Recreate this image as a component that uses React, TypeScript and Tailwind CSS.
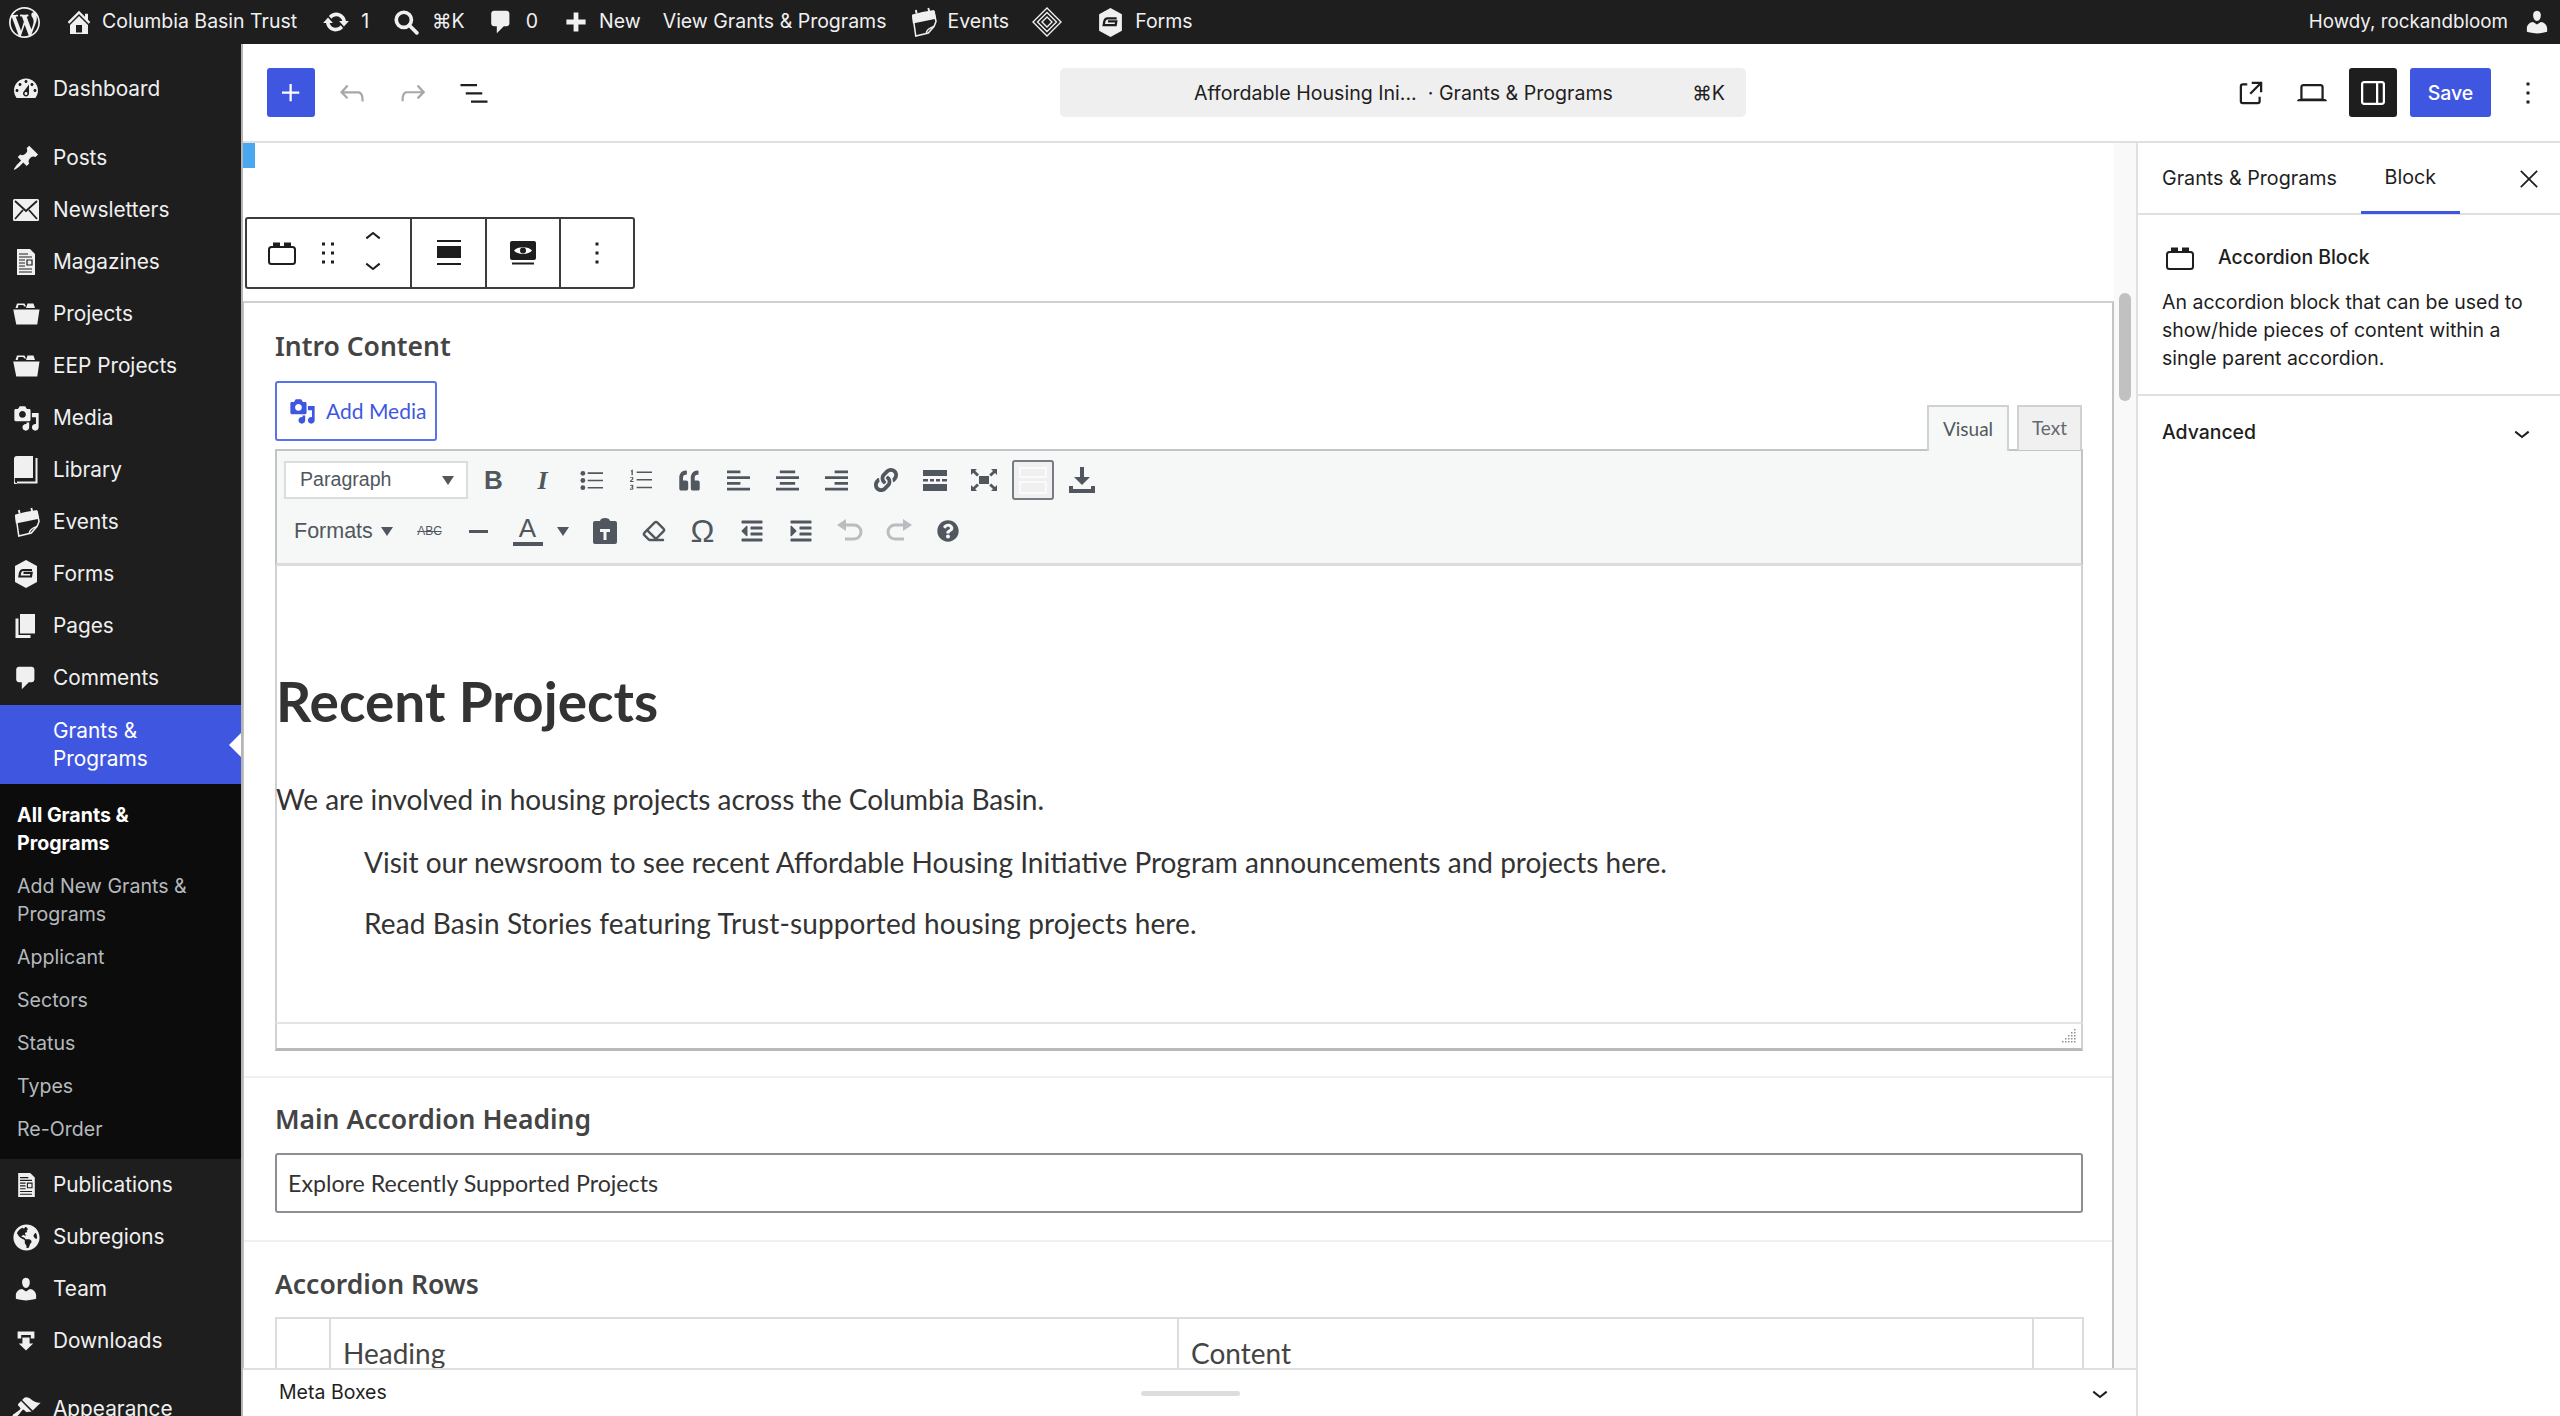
import type { ReactNode } from "react";
import { Eraser } from "lucide-react";
import { FaGlobeAmericas, FaQuoteLeft, FaLink, FaQuestionCircle, FaOutdent, FaIndent } from "react-icons/fa";

// icon helpers: dashicons are on a 20 grid, gutenberg on a 24 grid
function D({ d, className = "" }: { d: string; className?: string }) {
  return (
    <svg viewBox="0 0 20 20" fill="currentColor" className={className}>
      <path d={d} />
    </svg>
  );
}
function G({ d, className = "" }: { d: string; className?: string }) {
  return (
    <svg viewBox="0 0 24 24" fill="currentColor" className={className}>
      <path d={d} />
    </svg>
  );
}

const paths = {
  wp: "M20 10c0-5.51-4.49-10-10-10C4.48 0 0 4.49 0 10c0 5.52 4.48 10 10 10 5.51 0 10-4.48 10-10zM7.78 15.37L4.37 6.22c.55-.02 1.17-.08 1.17-.08.5-.06.44-1.13-.06-1.11 0 0-1.45.11-2.37.11-.18 0-.37 0-.58-.01C4.12 2.69 6.87 1.11 10 1.11c2.33 0 4.45.87 6.05 2.34-.68-.11-1.65.39-1.65 1.58 0 .74.45 1.36.9 2.1.35.61.55 1.36.55 2.46 0 1.49-1.4 5-1.4 5l-3.03-8.37c.54-.02.82-.17.82-.17.5-.05.44-1.25-.06-1.22 0 0-1.44.12-2.38.12-.87 0-2.33-.12-2.33-.12-.5-.03-.56 1.2-.06 1.22l.92.08 1.26 3.41zM17.41 10c.24-.64.74-1.87.43-4.25.7 1.29 1.05 2.71 1.05 4.25 0 3.29-1.73 6.24-4.4 7.78.97-2.59 1.94-5.2 2.92-7.78zM6.1 18.09C3.12 16.65 1.11 13.53 1.11 10c0-1.3.23-2.48.72-3.59C3.25 10.3 4.67 14.2 6.1 18.09zm4.03-6.63l2.58 6.98c-.86.29-1.76.45-2.71.45-.79 0-1.57-.11-2.29-.33.81-2.38 1.62-4.74 2.42-7.1z",
  home: "M16 8.5l1.53 1.53-1.06 1.06L10 4.62l-6.47 6.47-1.06-1.06L10 2.5l4 4v-2h2v4zm-6-2.46l6 5.99V18H4v-5.97zM12 17v-5H8v5h4z",
  update: "M10.2 3.28c3.53 0 6.43 2.61 6.92 6h2.08l-3.5 4-3.5-4h2.32c-.45-1.97-2.21-3.45-4.32-3.45-1.45 0-2.73.71-3.54 1.78L4.95 5.66C6.23 4.2 8.11 3.28 10.2 3.28zm-.4 13.44c-3.52 0-6.43-2.61-6.92-6H.8l3.5-4c1.17 1.33 2.33 2.67 3.5 4H5.48c.45 1.97 2.21 3.45 4.32 3.45 1.45 0 2.73-.71 3.54-1.78l1.71 1.95c-1.28 1.46-3.15 2.38-5.25 2.38z",
  comment: "M5 2h9c1.1 0 2 .9 2 2v7c0 1.1-.9 2-2 2h-2l-5 5v-5H5c-1.1 0-2-.9-2-2V4c0-1.1.9-2 2-2z",
  dashboard: "M3.76 16h12.48c1.1-1.37 1.76-3.11 1.76-5 0-4.42-3.58-8-8-8s-8 3.58-8 8c0 1.89.66 3.63 1.76 5zM10 4c.55 0 1 .45 1 1s-.45 1-1 1-1-.45-1-1 .45-1 1-1zM6 6c.55 0 1 .45 1 1s-.45 1-1 1-1-.45-1-1 .45-1 1-1zm8 0c.55 0 1 .45 1 1s-.45 1-1 1-1-.45-1-1 .45-1 1-1zm-5.37 5.55L12 7v6c0 1.1-.9 2-2 2s-2-.9-2-2c0-.57.24-1.08.63-1.45zM4 10c.55 0 1 .45 1 1s-.45 1-1 1-1-.45-1-1 .45-1 1-1zm12 0c.55 0 1 .45 1 1s-.45 1-1 1-1-.45-1-1 .45-1 1-1zm-5 3c0-.55-.45-1-1-1s-1 .45-1 1 .45 1 1 1 1-.45 1-1z",
  pin: "M10.44 3.02l1.82-1.82 6.36 6.35-1.83 1.82c-1.05-.68-2.48-.57-3.41.36l-.75.75c-.92.93-1.04 2.35-.35 3.41l-1.83 1.82-2.41-2.41-2.8 2.79c-.42.42-3.38 2.71-3.8 2.29s1.86-3.39 2.28-3.81l2.79-2.79L4.1 9.36l1.83-1.82c1.05.69 2.48.57 3.4-.36l.75-.75c.93-.92 1.05-2.35.36-3.41z",
  media: "M13 11V4c0-.55-.45-1-1-1h-1.67L9 1H5L3.67 3H2c-.55 0-1 .45-1 1v7c0 .55.45 1 1 1h10c.55 0 1-.45 1-1zM7 4.5c1.38 0 2.5 1.12 2.5 2.5S8.38 9.5 7 9.5 4.5 8.38 4.5 7 5.62 4.5 7 4.5zM14 6h5v10.5c0 1.38-1.12 2.5-2.5 2.5S14 17.88 14 16.5s1.12-2.5 2.5-2.5c.17 0 .34.02.5.05V9h-3V6zm-4 8.05V13h2v3.5c0 1.38-1.12 2.5-2.5 2.5S7 17.88 7 16.5 8.12 14 9.5 14c.17 0 .34.02.5.05z",
  page: "M6 15V2h10v13H6zm-1 1h8v2H3V5h2v11z",
  users: "M10 9.25c-2.27 0-2.73-3.44-2.73-3.44C7 4.02 7.82 2 9.97 2c2.16 0 2.98 2.02 2.71 3.81 0 0-.41 3.44-2.68 3.44zm0 2.57L12.72 10c2.39 0 4.52 2.33 4.52 4.53v2.49s-3.65 1.13-7.24 1.13c-3.65 0-7.24-1.13-7.24-1.13v-2.49c0-2.25 1.94-4.48 4.47-4.48z",
  brush: "M14.48 11.06L7.41 3.99l1.5-1.5c.5-.56 2.3-.47 3.51.32 1.21.8 1.43 1.28 2.91 2.1 1.18.64 2.45 1.26 4.45.85zm-.71.71L6.7 4.7 4.93 6.47c-.39.39-.39 1.02 0 1.41l1.06 1.06c.39.39.39 1.03 0 1.42-.6.6-1.43 1.11-2.21 1.69-.35.26-.7.53-1.01.84C1.43 13.23.4 14.85 1.2 15.65c.8.8 2.42-.23 3.76-1.57.31-.31.58-.66.85-1.02.57-.78 1.08-1.61 1.69-2.21.39-.39 1.02-.39 1.41 0l1.06 1.06c.39.39 1.02.39 1.41 0z",
  download: "M3 2h14v6h-3V5H6v3H3V2zm4 5h6v5h3l-6 6-6-6h3V7z",
  folder: "M3 6l1-3h5l1 2h-1L8 4H5L4.5 6H3zm-1.5 1H19l-1.5 10H3.5L1.5 7zM11 3h4l1 3h-6l1-3z",
  undo: "M18.3 11.7c-.6-.6-1.4-.9-2.3-.9H6.7l2.9-3.3-1.1-1-4.5 5L8.5 16l1-1-2.7-2.7H16c.5 0 .9.2 1.3.5 1 1 1 3.4 1 4.5v.3h1.5v-.2c0-1.5 0-4.3-1.5-5.7z",
  redo: "M15.6 6.5l-1.1 1 2.9 3.3H8c-.9 0-1.7.3-2.3.9-1.4 1.5-1.4 4.2-1.4 5.6v.2h1.5v-.3c0-1.1 0-3.5 1-4.5.3-.3.7-.5 1.3-.5h9.2L14.5 15l1.1 1.1 4.6-4.6-4.6-5z",
  list: "M3 6h11v1.5H3V6Zm3.5 5.5h11V13h-11v-1.5ZM21 17H10v1.5h11V17Z",
  more: "M13 19h-2v-2h2v2zm0-6h-2v-2h2v2zm0-6h-2V5h2v2z",
  external: "M19.5 4.5h-7V6h4.44l-5.97 5.97 1.06 1.06L18 7.06v4.44h1.5v-7Zm-13 1a2 2 0 0 0-2 2v10a2 2 0 0 0 2 2h10a2 2 0 0 0 2-2v-3H17v3a.5.5 0 0 1-.5.5h-10a.5.5 0 0 1-.5-.5v-10a.5.5 0 0 1 .5-.5h3V5.5h-3Z",
  laptop: "M20.5 16h-.7V8c0-1.1-.9-2-2-2H6.2c-1.1 0-2 .9-2 2v8h-.7c-.8 0-1.5.7-1.5 1.5h20c0-.8-.7-1.5-1.5-1.5zM5.7 8c0-.3.2-.5.5-.5h11.6c.3 0 .5.2.5.5v7.6H5.7V8z",
  sidebar: "M18 4H6c-1.1 0-2 .9-2 2v12c0 1.1.9 2 2 2h12c1.1 0 2-.9 2-2V6c0-1.1-.9-2-2-2zm-4 14.5H6c-.3 0-.5-.2-.5-.5V6c0-.3.2-.5.5-.5h8v13zm4.5-.5c0 .3-.2.5-.5.5h-2.5v-13H18c.3 0 .5.2.5.5v12z",
  drag: "M8 7h2V5H8v2zm0 6h2v-2H8v2zm0 6h2v-2H8v2zm6-14v2h2V5h-2zm0 8h2v-2h-2v2zm0 6h2v-2h-2v2z",
  close: "m13.06 12 6.47-6.47-1.06-1.06L12 10.94 5.53 4.47 4.47 5.53 10.94 12l-6.47 6.47 1.06 1.06L12 13.06l6.47 6.47 1.06-1.06L13.06 12Z",
  chevron: "M17.5 11.6L12 16l-5.5-4.4.9-1.2L12 14l4.5-3.6 1 1.2z",
  chevronUp: "M6.5 12.4L12 8l5.5 4.4-.9 1.2L12 10l-4.5 3.6-1-1.2z",
  plus: "M11 12.5V17.5H12.5V12.5H17.5V11H12.5V6H11V11H6V12.5H11Z",
};

function AccordionIcon({ className = "" }: { className?: string }) {
  return (
    <svg viewBox="0 0 28 24" className={className} fill="none" stroke="currentColor">
      <rect x="1" y="6" width="26" height="17" rx="2.5" strokeWidth="2" />
      <path d="M5 1.5h7v4H5zM16 1.5h7v4h-7z" fill="currentColor" stroke="none" />
    </svg>
  );
}

function EnvelopeIcon({ className = "" }: { className?: string }) {
  return (
    <svg viewBox="0 0 26 22" className={className}>
      <rect x="0" y="0" width="26" height="22" rx="1.5" fill="#f0f0f1" />
      <path d="M2 2l11 10L24 2M2 20l8-9M24 20l-8-9" fill="none" stroke="#1e1e1e" strokeWidth="1.8" />
    </svg>
  );
}

function MagazineIcon({ className = "" }: { className?: string }) {
  return (
    <svg viewBox="0 0 20 26" className={className}>
      <path d="M1 0h13l5 5v21H1z" fill="#f0f0f1" />
      <path d="M3 5h9M3 8h13M3 11h6M3 14h6M3 17h6M3 20h13M3 23h13M11 11h5v5h-5z" stroke="#1e1e1e" strokeWidth="1.2" fill="none" />
    </svg>
  );
}

function BookIcon({ className = "" }: { className?: string }) {
  return (
    <svg viewBox="0 0 24 28" className={className}>
      <path d="M3 0h16v22H0V3a3 3 0 0 1 3-3z" fill="#f0f0f1" />
      <path d="M22.5 2v24.5H3" fill="none" stroke="#f0f0f1" strokeWidth="2" />
      <path d="M0 22v3a3 3 0 0 0 3 3" fill="none" stroke="#f0f0f1" strokeWidth="1.5" />
    </svg>
  );
}

function CalendarIcon({ className = "" }: { className?: string }) {
  return (
    <svg viewBox="0 0 28 32" className={className} fill="none">
      <path d="M3 9l22-4 2 10-2 5-6 7-13 3z" stroke="#f0f0f1" strokeWidth="1.6" />
      <path d="M2 8c6-2 15-4 23-5l2 9L3 17z" fill="#f0f0f1" />
      <path d="M7 7l-1-4M20 5l-1-4" stroke="#f0f0f1" strokeWidth="2" />
      <path d="M17 27c0-3 2-5 8-7" stroke="#f0f0f1" strokeWidth="1.6" />
    </svg>
  );
}

function FormsIcon({ className = "" }: { className?: string }) {
  return (
    <svg viewBox="0 0 24 28" className={className}>
      <path d="M12 0l11 6v16l-11 6-11-6V6z" fill="#f0f0f1" />
      <path d="M18 10H9c-1.5 0-2.5 1-3 3l-.6 3.5H17l.6-3.600H9.500" fill="none" stroke="#1e1e1e" strokeWidth="2.2" />
    </svg>
  );
}

function DiamondIcon({ className = "" }: { className?: string }) {
  return (
    <svg viewBox="0 0 30 30" className={className} fill="none" stroke="#f0f0f1">
      <path d="M15 1l14 14-14 14L1 15z" strokeWidth="1.4" />
      <path d="M15 5.500L24.500 15 15 24.500 5.500 15z" strokeWidth="1.4" />
      <path d="M15 10l5 5-5 5-5-5z" strokeWidth="1.4" />
    </svg>
  );
}

function EyeDesktopIcon({ className = "" }: { className?: string }) {
  return (
    <svg viewBox="0 0 26 24" className={className}>
      <path d="M2 0h22a2 2 0 0 1 2 2v15a2 2 0 0 1-2 2H2a2 2 0 0 1-2-2V2a2 2 0 0 1 2-2z" fill="#1e1e1e" />
      <path d="M4 9.500C7 5 19 5 22 9.500 19 14 7 14 4 9.500z" fill="#fff" />
      <circle cx="13" cy="9.500" r="3" fill="#1e1e1e" />
      <path d="M2 22.500h22" stroke="#1e1e1e" strokeWidth="2" />
    </svg>
  );
}

type MenuItem = { label: string; icon: ReactNode; gap?: boolean };

const topMenu: MenuItem[] = [
  { label: "Posts", icon: <D d={paths.pin} className="w-[28px] h-[28px]" />, gap: true },
  { label: "Newsletters", icon: <EnvelopeIcon className="w-[26px] h-[22px]" /> },
  { label: "Magazines", icon: <MagazineIcon className="w-[20px] h-[26px]" /> },
  { label: "Projects", icon: <D d={paths.folder} className="w-[30px] h-[30px]" /> },
  { label: "EEP Projects", icon: <D d={paths.folder} className="w-[30px] h-[30px]" /> },
  { label: "Media", icon: <D d={paths.media} className="w-[27px] h-[27px]" /> },
  { label: "Library", icon: <BookIcon className="w-[24px] h-[28px]" /> },
  { label: "Events", icon: <CalendarIcon className="w-[27px] h-[31px]" /> },
  { label: "Forms", icon: <FormsIcon className="w-[24px] h-[28px]" /> },
  { label: "Pages", icon: <D d={paths.page} className="w-[30px] h-[30px]" /> },
  { label: "Comments", icon: <D d={paths.comment} className="w-[28px] h-[28px]" /> },
];

const bottomMenu: MenuItem[] = [
  { label: "Publications", icon: <MagazineIcon className="w-[19px] h-[24px]" /> },
  { label: "Subregions", icon: <FaGlobeAmericas className="w-[27px] h-[27px]" /> },
  { label: "Team", icon: <D d={paths.users} className="w-[28px] h-[28px]" /> },
  { label: "Downloads", icon: <D d={paths.download} className="w-[24px] h-[24px]" /> },
];

function MenuRow({ item }: { item: MenuItem }) {
  return (
    <div className={`flex items-center h-[52px] shrink-0 ${item.gap ? "mt-[17px]" : ""}`}>
      <div className="w-[53px] flex justify-center pr-[1px] text-[#f0f0f1]">{item.icon}</div>
      <span className="text-[20.8px] text-[#f0f0f1]">{item.label}</span>
    </div>
  );
}

function Sidebar() {
  return (
    <aside className="w-[243px] shrink-0 bg-[#1e1e1e] border-r-2 border-[#b5b5b5] flex flex-col overflow-hidden font-['Inter',sans-serif] pt-[19px]">
      <MenuRow item={{ label: "Dashboard", icon: <D d={paths.dashboard} className="w-[30px] h-[30px]" /> }} />
      {topMenu.map((m) => (
        <MenuRow key={m.label} item={m} />
      ))}
      <div className="relative mt-[1px] h-[79px] shrink-0 bg-[#3f57e0] flex items-center pl-[53px] text-[20.8px] leading-[28px] text-white">
        <span>
          Grants &amp;<br />Programs
        </span>
        <div className="absolute right-0 top-[28px] w-0 h-0 border-y-[12px] border-y-transparent border-r-[12px] border-r-white" />
      </div>
      <div className="bg-[#0c0c0c] h-[375px] shrink-0 pt-[17px] pl-[17px] flex flex-col gap-[15px] text-[19.6px] leading-[28px] text-[#b4b9be]">
        <span className="font-bold text-white">
          All Grants &amp;<br />Programs
        </span>
        <span>
          Add New Grants &amp;<br />Programs
        </span>
        <span>Applicant</span>
        <span>Sectors</span>
        <span>Status</span>
        <span>Types</span>
        <span>Re-Order</span>
      </div>
      {bottomMenu.map((m) => (
        <MenuRow key={m.label} item={m} />
      ))}
      <div className="mt-[16px]">
        <MenuRow item={{ label: "Appearance", icon: <D d={paths.brush} className="w-[30px] h-[30px]" /> }} />
      </div>
    </aside>
  );
}

function AdminBar() {
  return (
    <header className="h-[44px] shrink-0 bg-[#1e1e1e] flex items-center text-[#f0f0f1] text-[19.5px] font-['Inter',sans-serif]">
      <D d={paths.wp} className="ml-[9px] w-[31px] h-[31px]" />
      <D d={paths.home} className="ml-[24px] w-[30px] h-[30px]" />
      <span className="ml-[8px]">Columbia Basin Trust</span>
      <D d={paths.update} className="ml-[25px] w-[28px] h-[28px]" />
      <span className="ml-[11px]">1</span>
      <svg viewBox="0 0 24 24" fill="none" stroke="currentColor" strokeWidth="3.4" className="ml-[24px] w-[26px] h-[26px]">
        <circle cx="10" cy="10" r="7" />
        <path d="M15 15l7 7" strokeLinecap="round" />
      </svg>
      <span className="ml-[13px]">⌘K</span>
      <D d={paths.comment} className="ml-[22px] w-[28px] h-[28px]" />
      <span className="ml-[11px]">0</span>
      <svg viewBox="0 0 20 20" fill="currentColor" className="ml-[26px] w-[24px] h-[24px]">
        <path d="M8 2h4v6h6v4h-6v6H8v-6H2V8h6z" />
      </svg>
      <span className="ml-[11px]">New</span>
      <span className="ml-[22px]">View Grants &amp; Programs</span>
      <CalendarIcon className="ml-[24px] w-[27px] h-[31px]" />
      <span className="ml-[10px]">Events</span>
      <DiamondIcon className="ml-[23px] w-[30px] h-[30px]" />
      <FormsIcon className="ml-[36px] w-[25px] h-[29px]" />
      <span className="ml-[12px]">Forms</span>
      <span className="ml-auto text-[18.8px]">Howdy, rockandbloom</span>
      <D d={paths.users} className="ml-[15px] mr-[9px] w-[28px] h-[28px]" />
    </header>
  );
}

function TopBar() {
  return (
    <div className="h-[99px] shrink-0 bg-white border-b-2 border-[#e0e0e0] flex items-center font-['Inter',sans-serif]">
      <div className="ml-[24px] w-[48px] h-[49px] rounded-[3px] bg-[#3f57e0] text-white flex items-center justify-center">
        <G d={paths.plus} className="w-[36px] h-[36px]" />
      </div>
      <G d={paths.undo} className="ml-[19px] w-[36px] h-[36px] text-[#a8a8a8]" />
      <G d={paths.redo} className="ml-[25px] w-[36px] h-[36px] text-[#a8a8a8]" />
      <G d={paths.list} className="ml-[25px] w-[36px] h-[36px] text-[#1e1e1e]" />
      <div className="ml-[568px] w-[686px] h-[49px] rounded-[5px] bg-[#efefef] flex items-center pt-[2px] text-[19.6px] text-[#1e1e1e]">
        <span className="ml-[134px] whitespace-pre">Affordable Housing Ini...  · Grants &amp; Programs</span>
        <span className="ml-auto mr-[21px]">⌘K</span>
      </div>
      <G d={paths.external} className="ml-[487px] w-[36px] h-[36px] text-[#1e1e1e]" />
      <G d={paths.laptop} className="ml-[25px] w-[36px] h-[36px] text-[#1e1e1e]" />
      <div className="ml-[19px] w-[48px] h-[49px] rounded-[3px] bg-[#1e1e1e] text-white flex items-center justify-center">
        <G d={paths.sidebar} className="w-[36px] h-[36px]" />
      </div>
      <div className="ml-[13px] w-[81px] h-[49px] rounded-[3px] bg-[#3f57e0] pt-[2px] text-white flex items-center justify-center text-[19.5px] font-medium">
        Save
      </div>
      <G d={paths.more} className="ml-[19px] w-[36px] h-[36px] text-[#1e1e1e]" />
    </div>
  );
}

function BlockToolbar() {
  return (
    <div className="ml-[2px] mt-[49px] w-[390px] h-[72px] shrink-0 bg-white border-2 border-[#3c3c3c] rounded-[3px] flex text-[#1e1e1e]">
      <div className="w-[165px] h-full flex items-center border-r-2 border-[#3c3c3c]">
        <AccordionIcon className="ml-[21px] w-[28px] h-[24px]" />
        <G d={paths.drag} className="ml-[14px] w-[36px] h-[36px]" />
        <div className="ml-[11px] -mt-[4px] flex flex-col -space-y-[4px]">
          <G d={paths.chevronUp} className="w-[32px] h-[32px]" />
          <G d={paths.chevron} className="w-[32px] h-[32px]" />
        </div>
      </div>
      <div className="w-[75px] flex items-center justify-center border-r-2 border-[#3c3c3c]">
        <svg viewBox="0 0 24 26" fill="currentColor" className="w-[24px] h-[26px]">
          <path d="M0 0h24v2H0zM0 6h24v12H0zM0 23h24v2H0z" />
        </svg>
      </div>
      <div className="w-[74px] flex items-center justify-center border-r-2 border-[#3c3c3c]">
        <EyeDesktopIcon className="w-[26px] h-[24px]" />
      </div>
      <div className="flex-1 flex items-center justify-center">
        <G d={paths.more} className="w-[36px] h-[36px]" />
      </div>
    </div>
  );
}

const iconBox = "w-[49px] h-[38px] flex items-center justify-center shrink-0";

function AlignIcon({ kind }: { kind: "l" | "c" | "r" }) {
  const d =
    kind === "l"
      ? "M0 0h14v3H0zM0 6h24v3H0zM0 12h14v3H0zM0 18h24v3H0z"
      : kind === "c"
        ? "M4 0h16v3H4zM0 6h24v3H0zM4 12h16v3H4zM0 18h24v3H0z"
        : "M10 0h14v3H10zM0 6h24v3H0zM10 12h14v3H10zM0 18h24v3H0z";
  return (
    <svg viewBox="0 0 24 21" fill="currentColor" className="w-[23px] h-[21px]">
      <path d={d} />
    </svg>
  );
}

function Caret() {
  return <div className="w-0 h-0 border-x-[6px] border-x-transparent border-t-[9px] border-t-[#50575e]" />;
}

function EditorToolbar() {
  return (
    <div className="h-[117px] bg-[#f6f7f7] border-x-2 border-t-2 border-b-[3px] border-x-[#c3c4c7] border-t-[#c3c4c7] border-b-[#dcdcde] text-[#50575e] font-['Liberation_Sans',sans-serif] pl-[7px] pt-[10px]">
      <div className="flex items-center h-[38px]">
        <div className="w-[184px] h-[38px] bg-white border-2 border-[#dcdcde] flex items-center pl-[14px] pr-[12px] justify-between text-[19.6px]">
          Paragraph
          <Caret />
        </div>
        <div className="ml-[1px] flex items-center">
          <div className={`${iconBox} font-bold text-[26px]`}>B</div>
          <div className={`${iconBox} font-bold italic text-[26px] font-['Liberation_Serif',serif]`}>I</div>
          <div className={iconBox}>
            <svg viewBox="0 0 24 21" fill="currentColor" className="w-[23px] h-[21px]">
              <circle cx="3" cy="3" r="2.5" />
              <circle cx="3" cy="10.5" r="2.5" />
              <circle cx="3" cy="18" r="2.5" />
              <path d="M8 2h16v1.6H8zM8 9.7h16v1.6H8zM8 17.2h16v1.6H8z" />
            </svg>
          </div>
          <div className={iconBox}>
            <svg viewBox="0 0 24 22" fill="currentColor" className="w-[23px] h-[22px]">
              <path d="M2 1l2-1v6H2.600V2L2 2.200zM1 8.500c1-1 4-1 3.600 1 0 1-1.800 2-2.200 2.600h2.400v1H1v-1c1-1.200 2.400-2 2.400-2.800 0-.8-1.200-.6-2-.1zM1 16.500c1-.8 3.800-.8 3.600.9 0 .6-.4.9-.9 1 .6.200 1 .5 1 1.200 0 1.800-3 1.900-3.900 1l.5-.9c.6.500 2.100.6 2.100-.2 0-.6-.8-.7-1.400-.6v-.9c.7 0 1.300-.1 1.300-.6 0-.7-1.300-.5-2-.1z" />
              <path d="M8 2h16v1.600H8zM8 10h16v1.600H8zM8 18h16v1.600H8z" />
            </svg>
          </div>
          <div className={iconBox}><FaQuoteLeft className="w-[23px] h-[23px] scale-x-90" /></div>
          <div className={iconBox}><AlignIcon kind="l" /></div>
          <div className={iconBox}><AlignIcon kind="c" /></div>
          <div className={iconBox}><AlignIcon kind="r" /></div>
          <div className={iconBox}><FaLink className="w-[24px] h-[24px]" /></div>
          <div className={iconBox}>
            <svg viewBox="0 0 24 21" fill="currentColor" className="w-[24px] h-[21px]">
              <path d="M0 0h24v6H0zM0 9h5v2.500H0zM7 9h4v2.500H7zM13 9h4v2.500h-4zM19 9h5v2.500h-5zM0 14h24v7H0z" />
            </svg>
          </div>
          <div className={iconBox}>
            <svg viewBox="0 0 26 22" fill="currentColor" className="w-[26px] h-[22px]">
              <path d="M8 7h10v8H8zM0 0h6L4.200 1.800 8 5.500 6 7.500 2.200 3.800 0 6zM26 0v6l-2-2-3.800 3.500-2-2L22 2l-2-2zM0 22v-6l2.200 2.200L6 14.500l2 2L4.200 20 6 22zM26 22h-6l2-2-3.800-3.500 2-2L24 18l2-2z" />
            </svg>
          </div>
          <div className={iconBox}>
            <div className="w-[42px] h-[40px] shrink-0 rounded-[3px] border-2 border-[#787c82] bg-[#f0f0f1] flex flex-col items-center justify-center gap-[3px]">
              <div className="w-[28px] h-[11px] border-2 border-[#fafafa]" />
              <div className="w-[28px] h-[13px] border-2 border-[#fafafa]" />
            </div>
          </div>
          <div className={iconBox}>
            <svg viewBox="0 0 26 26" fill="currentColor" className="w-[26px] h-[26px]">
              <path d="M11 0h4v10h6l-8 8-8-8h6zM0 19h4v3h18v-3h4v7H0z" />
            </svg>
          </div>
        </div>
      </div>
      <div className="flex items-center h-[38px] mt-[13px]">
        <div className="w-[121px] shrink-0 flex items-center pl-[10px] text-[21.5px] gap-[8px] h-[38px]">
          Formats
          <Caret />
        </div>
        <div className={`${iconBox} text-[12px] line-through`}>ABC</div>
        <div className={iconBox}><div className="w-[19px] h-[3px] bg-[#50575e]" /></div>
        <div className={iconBox}>
          <div className="flex flex-col items-center">
            <span className="text-[26px] leading-[22px]">A</span>
            <div className="w-[30px] h-[4px] mt-[3px] bg-[#50575e]" />
          </div>
        </div>
        <div className="w-[21px] flex justify-center"><Caret /></div>
        <div className="w-[7px]" />
        <div className={iconBox}>
          <svg viewBox="0 0 24 26" className="w-[24px] h-[26px]">
            <path d="M2 3h5c0-4 10-4 10 0h5a2 2 0 0 1 2 2v19a2 2 0 0 1-2 2H2a2 2 0 0 1-2-2V5a2 2 0 0 1 2-2z" fill="#50575e" />
            <path d="M7 11h10v3h-3.500v8h-3v-8H7z" fill="#f6f7f7" />
          </svg>
        </div>
        <div className={iconBox}><Eraser className="w-[24px] h-[24px]" strokeWidth={2.4} /></div>
        <div className={`${iconBox} text-[32px]`}>Ω</div>
        <div className={iconBox}><FaOutdent className="w-[24px] h-[24px]" /></div>
        <div className={iconBox}><FaIndent className="w-[24px] h-[24px]" /></div>
        <div className={iconBox}>
          <svg viewBox="0 0 26 24" fill="none" stroke="#babcbf" strokeWidth="3" className="w-[26px] h-[24px]">
            <path d="M8 6h9a6.500 6.500 0 0 1 0 14H8" />
            <path d="M9 0v12L0 6z" fill="#babcbf" stroke="none" />
          </svg>
        </div>
        <div className={iconBox}>
          <svg viewBox="0 0 26 24" fill="none" stroke="#babcbf" strokeWidth="3" className="w-[26px] h-[24px] scale-x-[-1]">
            <path d="M8 6h9a6.500 6.500 0 0 1 0 14H8" />
            <path d="M9 0v12L0 6z" fill="#babcbf" stroke="none" />
          </svg>
        </div>
        <div className={iconBox}><FaQuestionCircle className="w-[22px] h-[22px]" /></div>
      </div>
    </div>
  );
}

function ResizeHandle() {
  const dots: [number, number][] = [];
  for (let r = 0; r < 5; r++) {
    for (let c = 4 - r; c < 5; c++) dots.push([c * 3, r * 3]);
  }
  return (
    <svg viewBox="0 0 15 15" className="w-[15px] h-[15px] mr-[4px] mb-[4px] text-[#8c8f94]" fill="currentColor">
      {dots.map(([x, y]) => (
        <rect key={`${x}-${y}`} x={x} y={y} width="1.500" height="1.500" />
      ))}
    </svg>
  );
}

function Canvas() {
  const heading = "font-['Noto_Sans',sans-serif] font-semibold text-[#444] text-[26.5px] leading-[30px]";
  const body = "font-['Lato',sans-serif] text-[#333] text-[28px] -ml-px";
  return (
    <div className="flex-1 flex min-h-0">
      <div className="flex-1 min-w-0 overflow-hidden bg-white flex flex-col">
        <div className="w-[12px] h-[25px] shrink-0 bg-[#4aa8f0]" />
        <BlockToolbar />
        <div className="mt-[12px] flex-1 border-t-2 border-r-2 border-l border-t-[#d0d0d0] border-r-[#c4c4c4] border-l-[#c4c4c4]">
          <div className="pl-[31px] pr-[29px] pt-[28px]">
            <div className={heading}>Intro Content</div>
            <div className="flex justify-between items-end mt-[20px]">
              <div className="mb-[8px] w-[162px] h-[60px] rounded-[3px] border-2 border-[#5a72ea] text-[#3f57e0] flex items-center font-['Lato',sans-serif] text-[21px]">
                <D d={paths.media} className="ml-[12px] w-[27px] h-[27px]" />
                <span className="ml-[10px]">Add Media</span>
              </div>
              <div className="flex items-end gap-[8px] -mb-[2px] relative z-10 font-['Lato',sans-serif] text-[19px] mr-[1px]">
                <div className="w-[82px] h-[46px] bg-[#f6f7f7] border-2 border-b-0 border-[#d0d1d4] flex items-center justify-center text-[#50575e]">Visual</div>
                <div className="w-[65px] h-[45px] mb-[1px] bg-[#f0f0f1] border-2 border-b-0 border-[#d0d1d4] flex items-center justify-center text-[#646970]">Text</div>
              </div>
            </div>
            <EditorToolbar />
            <div className="h-[456px] bg-white border-x-2 border-[#d0d1d4] pt-[105px]">
              <h1 className="font-['Lato',sans-serif] font-bold text-[#333] text-[55px] leading-[60px] -ml-px">Recent Projects</h1>
              <p className={`${body} mt-[48px] leading-[40px] tracking-[-0.05px]`}>We are involved in housing projects across the Columbia Basin.</p>
              <p className={`${body} mt-[23px] ml-[87px] leading-[40px]`}>Visit our newsroom to see recent Affordable Housing Initiative Program announcements and projects here.</p>
              <p className={`${body} mt-[21px] ml-[87px] leading-[40px] tracking-[0.12px]`}>Read Basin Stories featuring Trust-supported housing projects here.</p>
            </div>
            <div className="h-[29px] bg-white border-x-2 border-t-2 border-b-[3px] border-x-[#d0d1d4] border-t-[#e4e4e4] border-b-[#b9b9b9] flex justify-end items-end">
              <ResizeHandle />
            </div>
          </div>
          <div className="mt-[25px] h-[2px] bg-[#f0f0f1]" />
          <div className="pl-[31px] pr-[29px] pt-[26px]">
            <div className={heading}>Main Accordion Heading</div>
            <div className="mt-[19px] h-[60px] rounded-[3px] border-2 border-[#8c8f94] flex items-center pl-[11px] font-['Lato',sans-serif] text-[23.2px] text-[#333]">
              Explore Recently Supported Projects
            </div>
          </div>
          <div className="mt-[27px] h-[2px] bg-[#f0f0f1]" />
          <div className="pl-[31px] pr-[28px] pt-[27px]">
            <div className={heading}>Accordion Rows</div>
            <div className="mt-[18px] h-[200px] border-2 border-[#dcdcde] grid grid-cols-[54px_848px_855px_1fr] font-['Lato',sans-serif] text-[28px] text-[#444]">
              <div className="border-r-2 border-[#dcdcde]" />
              <div className="border-r-2 border-[#dcdcde] pl-[12px] pt-[13px]">Heading</div>
              <div className="border-r-2 border-[#dcdcde] pl-[12px] pt-[13px]">Content</div>
              <div />
            </div>
          </div>
        </div>
      </div>
      <div className="w-[22px] shrink-0 bg-[#f9f9f9] pl-[5px] pt-[150px]">
        <div className="w-[12px] h-[108px] rounded-full bg-[#c1c1c1]" />
      </div>
    </div>
  );
}

function SettingsPanel() {
  return (
    <aside className="w-[424px] shrink-0 bg-white border-l-2 border-[#e0e0e0] font-['Inter',sans-serif] text-[#1e1e1e]">
      <div className="h-[72px] border-b-2 border-[#e0e0e0] flex items-center relative text-[19.7px] pt-[2px]">
        <span className="ml-[24px]">Grants &amp; Programs</span>
        <div className="ml-[24px] w-[99px] h-[70px] border-b-[3px] border-[#3f57e0] flex items-center justify-center">Block</div>
        <G d={paths.close} className="ml-auto mr-[17px] w-[28px] h-[28px]" />
      </div>
      <div className="h-[181px] border-b-2 border-[#e0e0e0] pl-[24px] pr-[28px] pt-[29px]">
        <div className="flex items-center h-[28px]">
          <AccordionIcon className="ml-[4px] w-[28px] h-[24px]" />
          <span className="ml-[24px] font-medium text-[19.4px]">Accordion Block</span>
        </div>
        <p className="mt-[16px] text-[19.5px] leading-[28px]">
          An accordion block that can be used to show/hide pieces of content within a single parent accordion.
        </p>
      </div>
      <div className="h-[72px] flex items-center justify-between pl-[24px] pr-[22px] font-medium text-[19.4px] pt-[2px]">
        Advanced
        <G d={paths.chevron} className="w-[32px] h-[32px]" />
      </div>
    </aside>
  );
}

function MetaBoxes() {
  return (
    <div className="h-[48px] shrink-0 bg-white border-t-2 border-[#e0e0e0] flex items-center relative font-['Inter',sans-serif] text-[19.5px] text-[#1e1e1e]">
      <span className="ml-[36px]">Meta Boxes</span>
      <div className="absolute left-[898px] w-[99px] h-[5px] rounded-full bg-[#dddddd]" />
      <G d={paths.chevron} className="ml-auto mr-[20px] w-[32px] h-[32px]" />
    </div>
  );
}

export default function App() {
  return (
    <div className="w-[2560px] h-[1416px] overflow-hidden flex flex-col bg-white">
      <AdminBar />
      <div className="flex-1 flex min-h-0">
        <Sidebar />
        <main className="flex-1 min-w-0 flex flex-col">
          <TopBar />
          <div className="flex-1 flex min-h-0">
            <div className="flex-1 min-w-0 flex flex-col">
              <Canvas />
              <MetaBoxes />
            </div>
            <SettingsPanel />
          </div>
        </main>
      </div>
    </div>
  );
}
